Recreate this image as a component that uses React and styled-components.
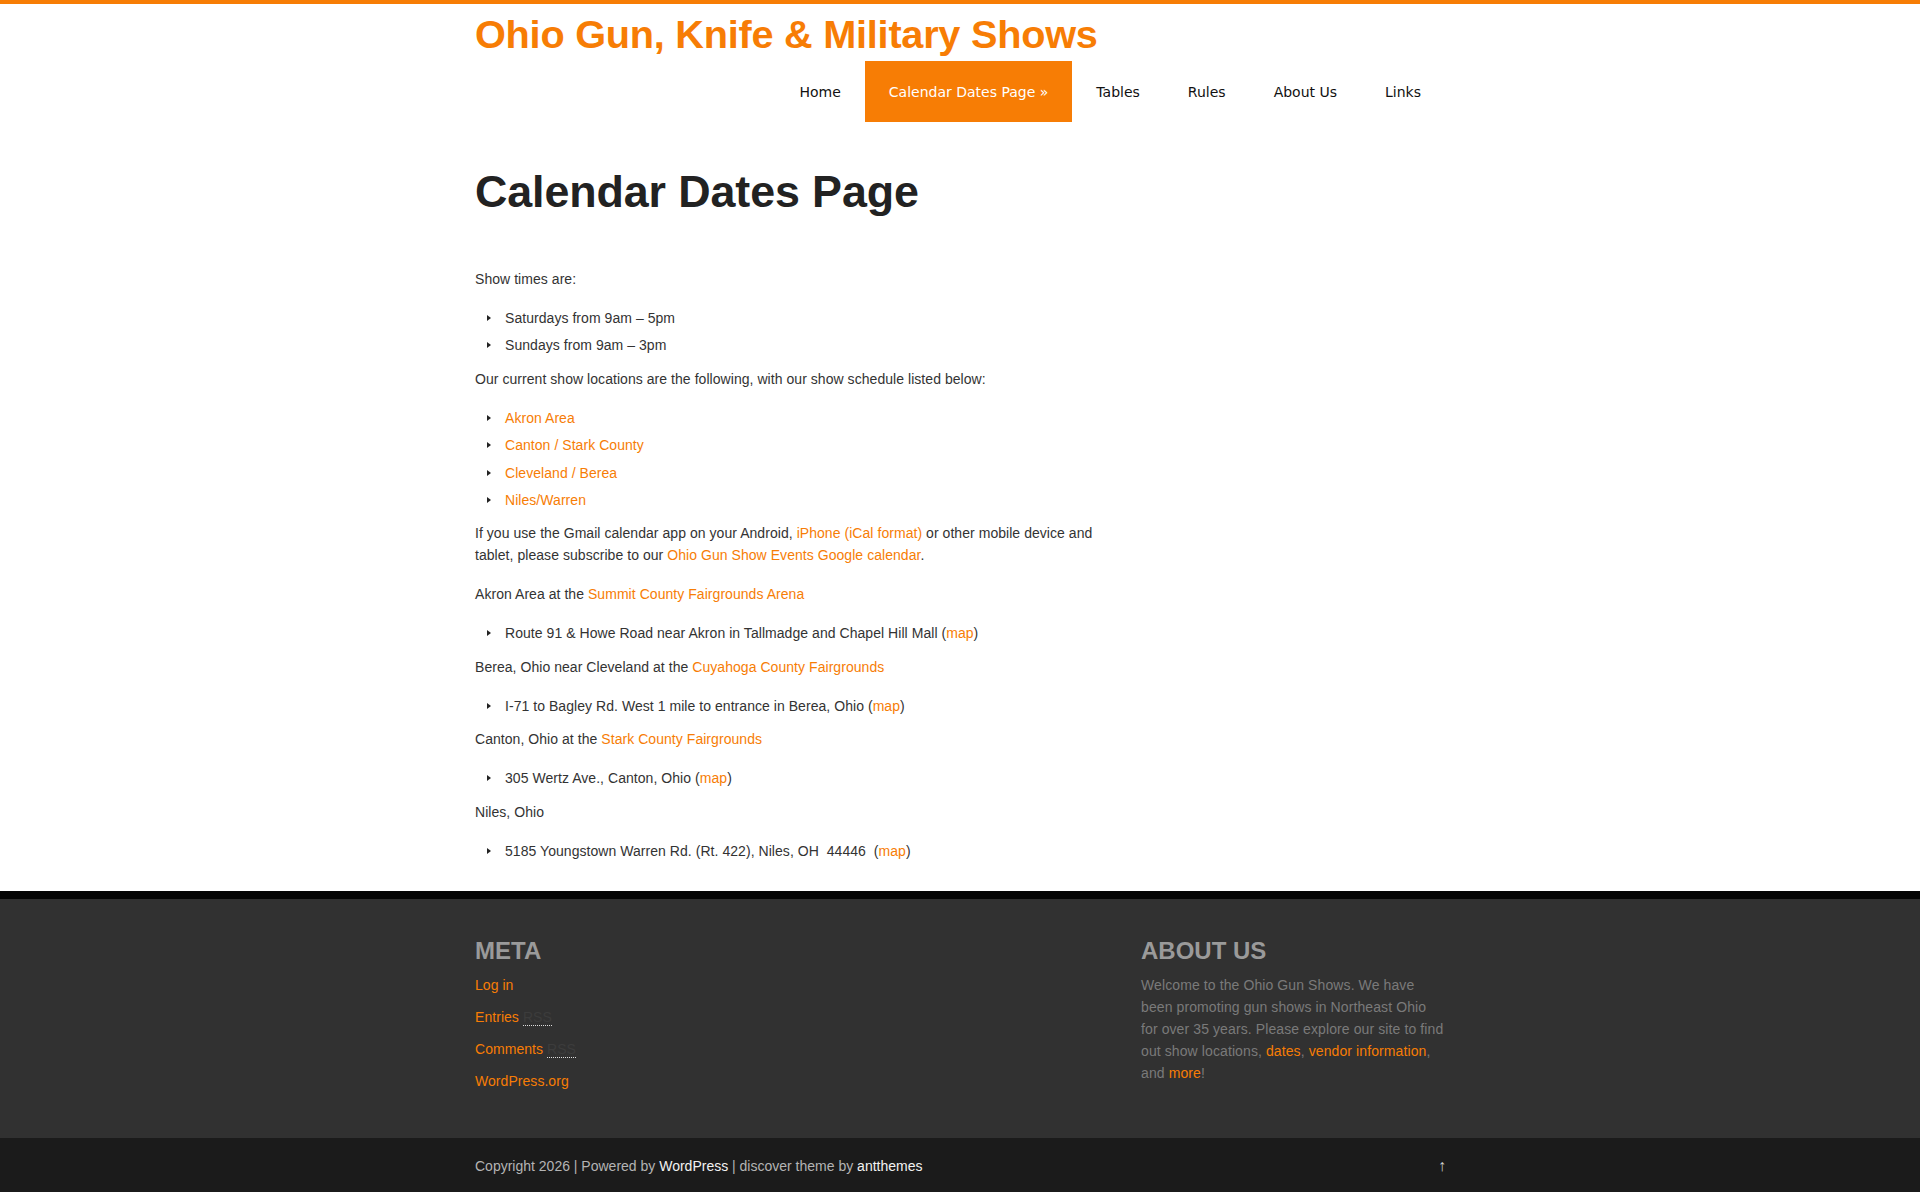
import styled, { createGlobalStyle } from "styled-components";

const ORANGE = "#f77d05";

const GlobalStyle = createGlobalStyle`
  html, body {
    margin: 0;
    padding: 0;
    background: #fff;
  }
  body {
    font-family: "Liberation Sans", Arial, Helvetica, sans-serif;
    font-size: 14px;
    letter-spacing: 0.05px;
    color: #333;
    border-top: 4px solid ${ORANGE};
  }
  a {
    color: ${ORANGE};
    text-decoration: none;
  }
`;

const Wrap = styled.div`
  width: 970px;
  margin: 0 auto;
`;

const Header = styled.header`
  padding-top: 6px;
`;

const SiteTitle = styled.h1`
  margin: 0 0 3px;
  font-size: 39.7px;
  line-height: 48px;
  font-weight: bold;
  letter-spacing: -0.25px;
  & > a {
    color: ${ORANGE};
  }
`;

const Nav = styled.nav`
  display: flex;
  justify-content: flex-end;
  height: 61px;
`;

const NavItem = styled.a`
  display: block;
  padding: 0 24px;
  line-height: 62px;
  font-family: "DejaVu Sans", Verdana, sans-serif;
  font-size: 14px;
  letter-spacing: 0;
  color: ${(p) => (p.$active ? "#fff" : "#111")};
  background: ${(p) => (p.$active ? ORANGE : "transparent")};
`;

const Main = styled.main`
  padding: 43px 0 18px;
`;

const Article = styled.article`
  width: 646px;
`;

const PageTitle = styled.h2`
  margin: 0 0 50px;
  font-size: 44.8px;
  line-height: 53px;
  font-weight: bold;
  color: #222;
  letter-spacing: -0.1px;
`;

const Para = styled.p`
  margin: 0 0 17px;
  line-height: 22px;
`;

const List = styled.ul`
  margin: 0 0 11px;
  padding: 0;
  list-style: none;
`;

const Item = styled.li`
  position: relative;
  margin-bottom: 5px;
  padding-left: 30px;
  line-height: 22.4px;
  &::before {
    content: "";
    position: absolute;
    left: 12px;
    top: 8px;
    border-style: solid;
    border-width: 3.5px 0 3.5px 4px;
    border-color: transparent transparent transparent #222;
  }
`;

const Footer = styled.footer`
  background: #313131;
  border-top: 8px solid #050505;
  padding: 37px 0 46px;
`;

const FooterGrid = styled(Wrap)`
  display: grid;
  grid-template-columns: 1fr 304px;
`;

const WidgetTitle = styled.h3`
  margin: 0 0 9px;
  font-size: 24px;
  line-height: 29px;
  font-weight: bold;
  color: #9a9a9a;
  letter-spacing: 0;
`;

const MetaList = styled.ul`
  margin: 0;
  padding: 0;
  list-style: none;
`;

const MetaItem = styled.li`
  line-height: 22px;
  margin-bottom: 10px;
  &:last-child {
    margin-bottom: 0;
  }
`;

const Abbr = styled.abbr`
  color: #3c3c3c;
  text-decoration: none;
  border-bottom: 1px dotted #ddd;
`;

const AboutText = styled.p`
  margin: 0;
  line-height: 22px;
  color: #7a7a7a;
  letter-spacing: 0.1px;
`;

const BottomBar = styled.div`
  background: #1b1b1b;
  height: 55px;
`;

const BottomInner = styled(Wrap)`
  display: flex;
  justify-content: space-between;
  align-items: center;
  height: 55px;
  color: #b4b4b4;
  font-size: 14px;
  letter-spacing: 0;
  & a {
    color: #f2f2f2;
  }
`;

const ToTop = styled.a`
  color: #d0d0d0 !important;
  font-size: 16px;
  margin-right: -1px;
`;

const navLinks = ["Home", "Calendar Dates Page »", "Tables", "Rules", "About Us", "Links"];

export default function App() {
  return (
    <>
      <GlobalStyle />
      <Header>
        <Wrap>
          <SiteTitle>
            <a href="#">Ohio Gun, Knife &amp; Military Shows</a>
          </SiteTitle>
          <Nav>
            {navLinks.map((label) => (
              <NavItem key={label} href="#" $active={label.startsWith("Calendar")}>
                {label}
              </NavItem>
            ))}
          </Nav>
        </Wrap>
      </Header>

      <Main>
        <Wrap>
          <Article>
            <PageTitle>Calendar Dates Page</PageTitle>
            <Para>Show times are:</Para>
            <List>
              <Item>Saturdays from 9am – 5pm</Item>
              <Item>Sundays from 9am – 3pm</Item>
            </List>
            <Para>Our current show locations are the following, with our show schedule listed below:</Para>
            <List>
              <Item><a href="#">Akron Area</a></Item>
              <Item><a href="#">Canton / Stark County</a></Item>
              <Item><a href="#">Cleveland / Berea</a></Item>
              <Item><a href="#">Niles/Warren</a></Item>
            </List>
            <Para>
              If you use the Gmail calendar app on your Android, <a href="#">iPhone (iCal format)</a> or
              other mobile device and tablet, please subscribe to our{" "}
              <a href="#">Ohio Gun Show Events Google calendar</a>.
            </Para>
            <Para>
              Akron Area at the <a href="#">Summit County Fairgrounds Arena</a>
            </Para>
            <List>
              <Item>
                Route 91 &amp; Howe Road near Akron in Tallmadge and Chapel Hill Mall (<a href="#">map</a>)
              </Item>
            </List>
            <Para>
              Berea, Ohio near Cleveland at the <a href="#">Cuyahoga County Fairgrounds</a>
            </Para>
            <List>
              <Item>
                I-71 to Bagley Rd. West 1 mile to entrance in Berea, Ohio (<a href="#">map</a>)
              </Item>
            </List>
            <Para>
              Canton, Ohio at the <a href="#">Stark County Fairgrounds</a>
            </Para>
            <List>
              <Item>
                305 Wertz Ave., Canton, Ohio (<a href="#">map</a>)
              </Item>
            </List>
            <Para>Niles, Ohio</Para>
            <List>
              <Item>
                5185 Youngstown Warren Rd. (Rt. 422), Niles, OH&nbsp; 44446&nbsp; (<a href="#">map</a>)
              </Item>
            </List>
          </Article>
        </Wrap>
      </Main>

      <Footer>
        <FooterGrid>
          <section>
            <WidgetTitle>META</WidgetTitle>
            <MetaList>
              <MetaItem><a href="#">Log in</a></MetaItem>
              <MetaItem>
                <a href="#">Entries <Abbr title="Really Simple Syndication">RSS</Abbr></a>
              </MetaItem>
              <MetaItem>
                <a href="#">Comments <Abbr title="Really Simple Syndication">RSS</Abbr></a>
              </MetaItem>
              <MetaItem><a href="#">WordPress.org</a></MetaItem>
            </MetaList>
          </section>
          <section>
            <WidgetTitle>ABOUT US</WidgetTitle>
            <AboutText>
              Welcome to the Ohio Gun Shows. We have been promoting gun shows in Northeast Ohio for over
              35 years. Please explore our site to find out show locations, <a href="#">dates</a>,{" "}
              <a href="#">vendor information</a>, and <a href="#">more</a>!
            </AboutText>
          </section>
        </FooterGrid>
      </Footer>

      <BottomBar>
        <BottomInner>
          <span>
            Copyright 2026 | Powered by <a href="#">WordPress</a> | discover theme by <a href="#">antthemes</a>
          </span>
          <ToTop href="#">↑</ToTop>
        </BottomInner>
      </BottomBar>
    </>
  );
}
